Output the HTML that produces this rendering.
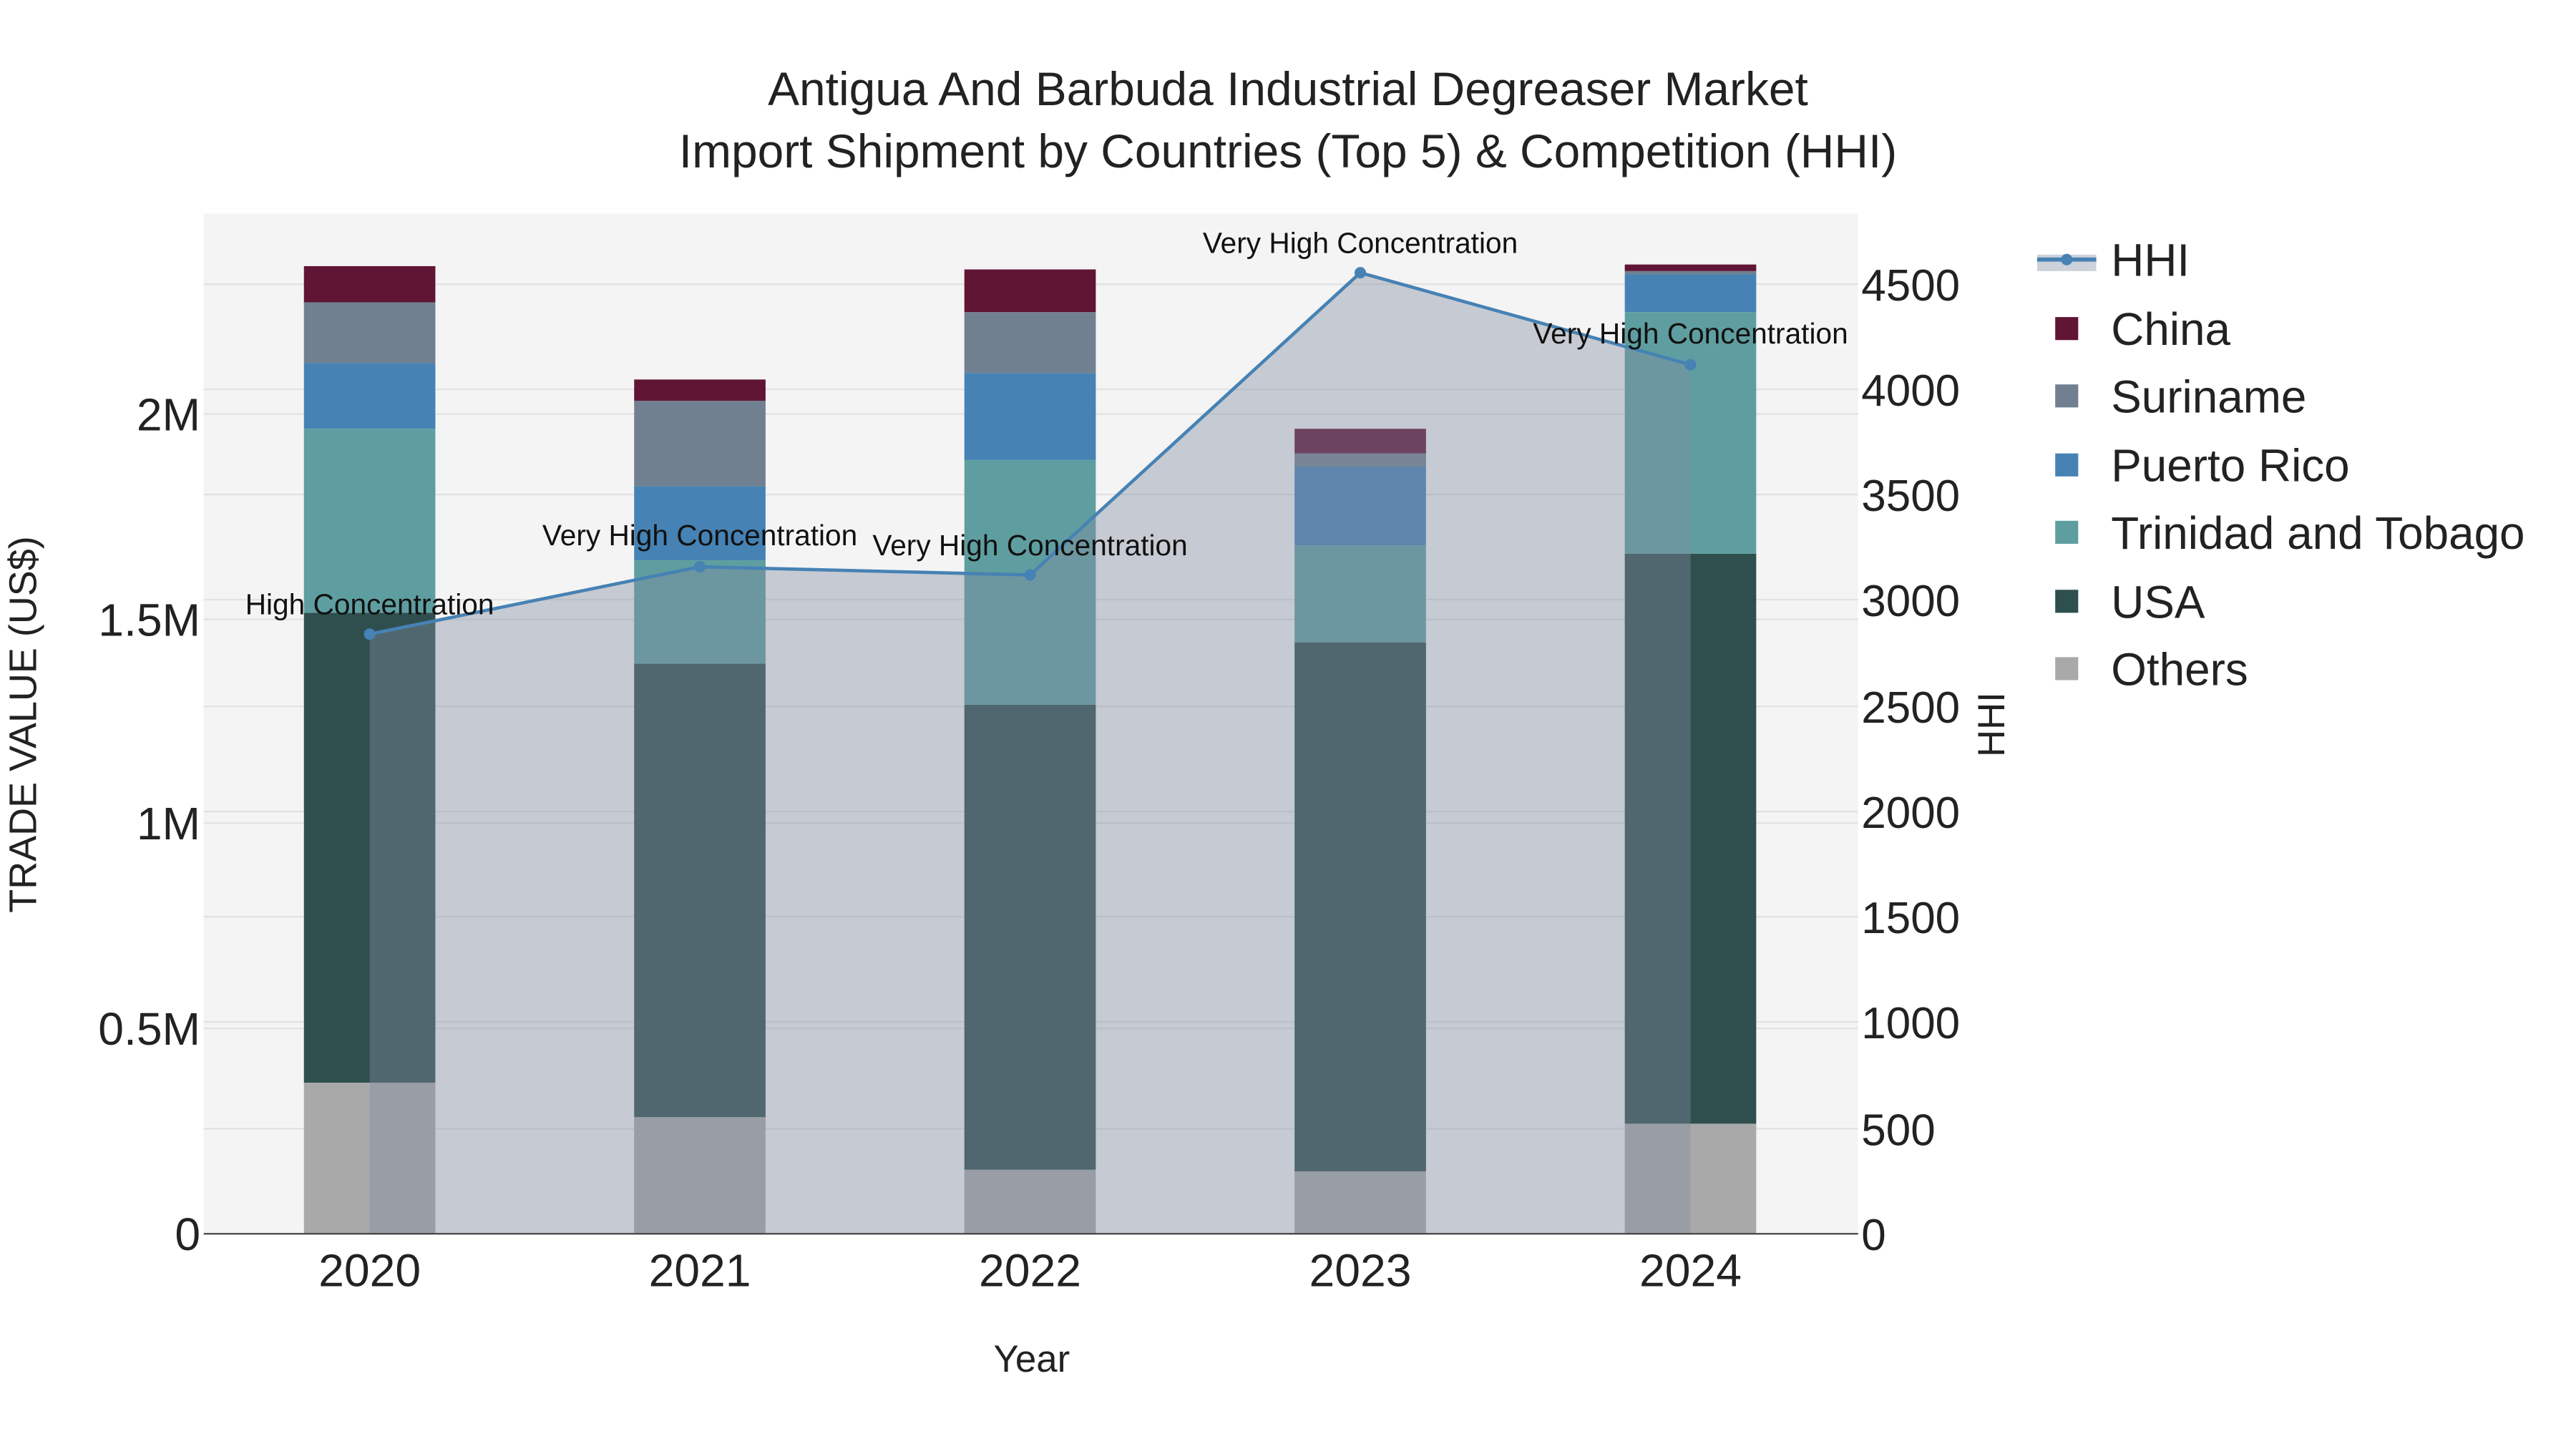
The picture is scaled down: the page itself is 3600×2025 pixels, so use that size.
<!DOCTYPE html>
<html><head><meta charset="utf-8"><style>html,body{margin:0;padding:0;background:#fff}svg{display:block}</style></head><body>
<svg width="3600" height="2025" viewBox="0 0 1568 882" xmlns="http://www.w3.org/2000/svg" font-family="Liberation Sans, sans-serif">
<rect width="1568" height="882" fill="#fff"/>
<rect x="124" y="130" width="1007" height="621" fill="#f4f4f4"/>
<g stroke="#e2e2e2" stroke-width="1">
<line x1="124" x2="1131" y1="687" y2="687"/><line x1="124" x2="1131" y1="622" y2="622"/><line x1="124" x2="1131" y1="558" y2="558"/><line x1="124" x2="1131" y1="494" y2="494"/><line x1="124" x2="1131" y1="430" y2="430"/><line x1="124" x2="1131" y1="365" y2="365"/><line x1="124" x2="1131" y1="301" y2="301"/><line x1="124" x2="1131" y1="237" y2="237"/><line x1="124" x2="1131" y1="173" y2="173"/>
<line x1="124" x2="1131" y1="626" y2="626"/><line x1="124" x2="1131" y1="501" y2="501"/><line x1="124" x2="1131" y1="377" y2="377"/><line x1="124" x2="1131" y1="252" y2="252"/>
</g>
<g>
<rect x="185" y="659" width="80" height="92" fill="#a9a9a9"/><rect x="185" y="373" width="80" height="286" fill="#2f4f4f"/><rect x="185" y="261" width="80" height="112" fill="#5f9ea0"/><rect x="185" y="221" width="80" height="40" fill="#4682b4"/><rect x="185" y="184" width="80" height="37" fill="#708090"/><rect x="185" y="162" width="80" height="22" fill="#601535"/>
<rect x="386" y="680" width="80" height="71" fill="#a9a9a9"/><rect x="386" y="404" width="80" height="276" fill="#2f4f4f"/><rect x="386" y="341" width="80" height="63" fill="#5f9ea0"/><rect x="386" y="296" width="80" height="45" fill="#4682b4"/><rect x="386" y="244" width="80" height="52" fill="#708090"/><rect x="386" y="231" width="80" height="13" fill="#601535"/>
<rect x="587" y="712" width="80" height="39" fill="#a9a9a9"/><rect x="587" y="429" width="80" height="283" fill="#2f4f4f"/><rect x="587" y="280" width="80" height="149" fill="#5f9ea0"/><rect x="587" y="227" width="80" height="53" fill="#4682b4"/><rect x="587" y="190" width="80" height="37" fill="#708090"/><rect x="587" y="164" width="80" height="26" fill="#601535"/>
<rect x="788" y="713" width="80" height="38" fill="#a9a9a9"/><rect x="788" y="391" width="80" height="322" fill="#2f4f4f"/><rect x="788" y="332" width="80" height="59" fill="#5f9ea0"/><rect x="788" y="284" width="80" height="48" fill="#4682b4"/><rect x="788" y="276" width="80" height="8" fill="#708090"/><rect x="788" y="261" width="80" height="15" fill="#601535"/>
<rect x="989" y="684" width="80" height="67" fill="#a9a9a9"/><rect x="989" y="337" width="80" height="347" fill="#2f4f4f"/><rect x="989" y="190" width="80" height="147" fill="#5f9ea0"/><rect x="989" y="167" width="80" height="23" fill="#4682b4"/><rect x="989" y="165" width="80" height="2" fill="#708090"/><rect x="989" y="161" width="80" height="4" fill="#601535"/>
</g>
<polygon points="225,751 225,386 426,345 627,350 828,166 1029,222 1029,751" fill="rgba(130,140,160,0.4)"/>
<polyline points="225,386 426,345 627,350 828,166 1029,222" fill="none" stroke="#4682b4" stroke-width="2"/>
<g fill="#4682b4"><circle cx="225" cy="386" r="3.5"/><circle cx="426" cy="345" r="3.5"/><circle cx="627" cy="350" r="3.5"/><circle cx="828" cy="166" r="3.5"/><circle cx="1029" cy="222" r="3.5"/></g>
<line x1="124" x2="1131" y1="751" y2="751" stroke="#444" stroke-width="1"/>
<g font-size="17.7" fill="#111" text-anchor="middle">
<text x="225" y="374">High Concentration</text><text x="426" y="332">Very High Concentration</text><text x="627" y="338">Very High Concentration</text><text x="828" y="154">Very High Concentration</text><text x="1029" y="209">Very High Concentration</text>
</g>
<g font-size="28.7" fill="#222" text-anchor="middle">
<text x="784" y="64">Antigua And Barbuda Industrial Degreaser Market</text>
<text x="784" y="102">Import Shipment by Countries (Top 5) &amp; Competition (HHI)</text>
</g>
<g font-size="28" fill="#222" text-anchor="end">
<text x="122" y="761">0</text><text x="122" y="636">0.5M</text><text x="122" y="511">1M</text><text x="122" y="387">1.5M</text><text x="122" y="262">2M</text>
</g>
<g font-size="27" fill="#222" text-anchor="start">
<text x="1133" y="761">0</text><text x="1133" y="697">500</text><text x="1133" y="632">1000</text><text x="1133" y="568">1500</text><text x="1133" y="504">2000</text><text x="1133" y="440">2500</text><text x="1133" y="375">3000</text><text x="1133" y="311">3500</text><text x="1133" y="247">4000</text><text x="1133" y="183">4500</text>
</g>
<g font-size="28" fill="#222" text-anchor="middle">
<text x="225" y="783">2020</text><text x="426" y="783">2021</text><text x="627" y="783">2022</text><text x="828" y="783">2023</text><text x="1029" y="783">2024</text>
</g>
<text x="628" y="835" font-size="23" fill="#222" text-anchor="middle">Year</text>
<text transform="translate(22,441) rotate(-90)" font-size="23.5" fill="#222" text-anchor="middle">TRADE VALUE (US$)</text>
<text transform="translate(1220,441) rotate(-90)" font-size="23" fill="#222" text-anchor="middle">HHI</text>
<g font-size="27.8" fill="#222">
<rect x="1240" y="155" width="36" height="10" fill="rgba(130,140,160,0.4)"/>
<line x1="1240" x2="1276" y1="158" y2="158" stroke="#4682b4" stroke-width="2.5"/><circle cx="1258" cy="158" r="3.5" fill="#4682b4"/>
<text x="1285" y="168">HHI</text>
<rect x="1251" y="193" width="14" height="14" fill="#601535"/><text x="1285" y="210">China</text>
<rect x="1251" y="234" width="14" height="14" fill="#708090"/><text x="1285" y="251">Suriname</text>
<rect x="1251" y="276" width="14" height="14" fill="#4682b4"/><text x="1285" y="293">Puerto Rico</text>
<rect x="1251" y="317" width="14" height="14" fill="#5f9ea0"/><text x="1285" y="334">Trinidad and Tobago</text>
<rect x="1251" y="359" width="14" height="14" fill="#2f4f4f"/><text x="1285" y="376">USA</text>
<rect x="1251" y="400" width="14" height="14" fill="#a9a9a9"/><text x="1285" y="417">Others</text>
</g>
</svg>
</body></html>
